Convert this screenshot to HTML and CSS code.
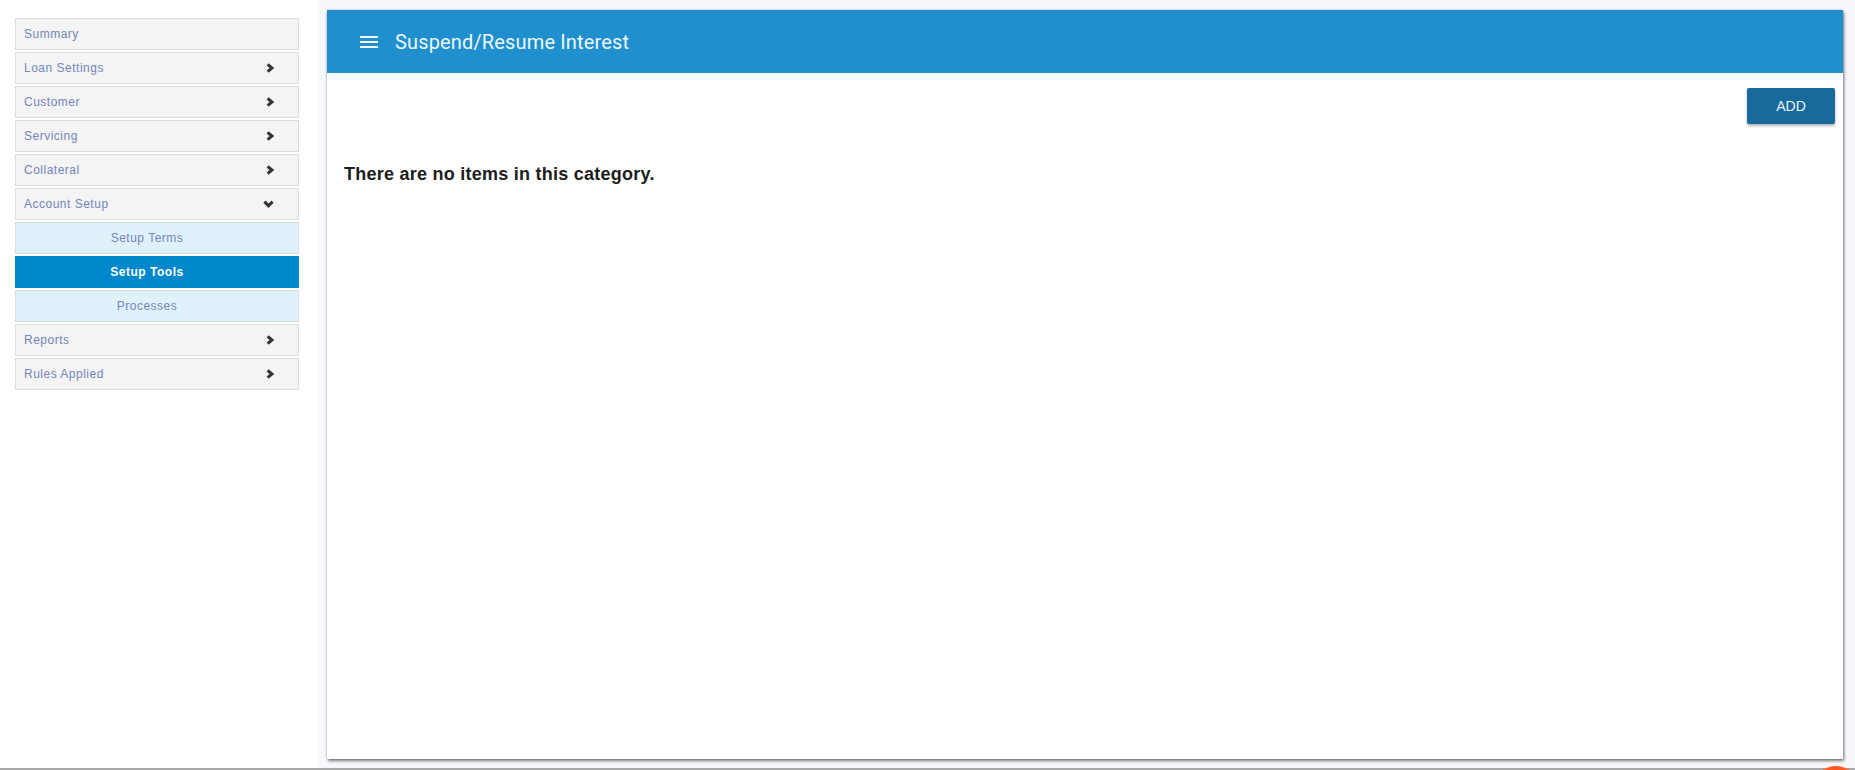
FILE: index.html
```html
<!DOCTYPE html>
<html lang="en">
<head>
<meta charset="utf-8">
<title>Suspend/Resume Interest</title>
<link rel="stylesheet" href="styles.css">
</head>
<body>
<div class="app">
  <aside class="sidebar">
    <nav class="menu">
      <div class="item"><span>Summary</span></div>
      <div class="item"><span>Loan Settings</span><svg class="chev" viewBox="0 0 8 10"><polyline points="1.6,1.4 6,5 1.6,8.6"/></svg></div>
      <div class="item"><span>Customer</span><svg class="chev" viewBox="0 0 8 10"><polyline points="1.6,1.4 6,5 1.6,8.6"/></svg></div>
      <div class="item"><span>Servicing</span><svg class="chev" viewBox="0 0 8 10"><polyline points="1.6,1.4 6,5 1.6,8.6"/></svg></div>
      <div class="item"><span>Collateral</span><svg class="chev" viewBox="0 0 8 10"><polyline points="1.6,1.4 6,5 1.6,8.6"/></svg></div>
      <div class="item"><span>Account Setup</span><svg class="chev down" viewBox="0 0 11 8"><polyline points="1.4,1.6 5.5,5.8 9.6,1.6"/></svg></div>
      <div class="sub">Setup Terms</div>
      <div class="sub active">Setup Tools</div>
      <div class="sub">Processes</div>
      <div class="item"><span>Reports</span><svg class="chev" viewBox="0 0 8 10"><polyline points="1.6,1.4 6,5 1.6,8.6"/></svg></div>
      <div class="item"><span>Rules Applied</span><svg class="chev" viewBox="0 0 8 10"><polyline points="1.6,1.4 6,5 1.6,8.6"/></svg></div>
    </nav>
  </aside>
  <main class="main">
    <section class="card">
      <header class="card-head">
        <svg class="burger" viewBox="0 0 18 12"><rect x="0" y="0" width="18" height="2"/><rect x="0" y="5" width="18" height="2"/><rect x="0" y="10" width="18" height="2"/></svg>
        <h1 class="title">Suspend/Resume Interest</h1>
      </header>
      <div class="card-body">
        <div class="actions"><button class="btn">ADD</button></div>
        <p class="empty">There are no items in this category.</p>
      </div>
    </section>
  </main>
</div>
<div class="chat-bubble"></div>
</body>
</html>
```
FILE: styles.css
```css
* { box-sizing: border-box; }
html, body { margin: 0; padding: 0; }
body {
  width: 1855px;
  height: 770px;
  overflow: hidden;
  background: #ffffff;
  font-family: "Liberation Sans", Arial, sans-serif;
}
.app {
  display: flex;
  height: 770px;
  border-bottom: 2px solid #a9a9a9;
}
.sidebar {
  width: 317px;
  flex: none;
  background: #ffffff;
  padding: 18px 18px 0 15px;
}
.menu {
  display: flex;
  flex-direction: column;
  gap: 2px;
}
.item, .sub {
  height: 32px;
  border: 1px solid #dcdcdc;
  background: #f4f4f4;
  color: #7385bb;
  font-size: 12px;
  letter-spacing: 0.5px;
  display: flex;
  align-items: center;
}
.item {
  padding: 0 0 1px 8px;
  justify-content: space-between;
}
.chev {
  width: 8px;
  height: 10px;
  margin-right: 24px;
  fill: none;
  stroke: #333333;
  stroke-width: 3.1;
  stroke-linecap: butt;
  stroke-linejoin: miter;
}
.chev.down {
  width: 11px;
  height: 8px;
  margin-right: 24px;
}
.sub {
  justify-content: center;
  background: #dff2fb;
  padding: 0 20px 1px 0;
}
.sub.active {
  background: #0088cc;
  border-color: #0088cc;
  color: #ffffff;
  font-weight: bold;
}
.main {
  flex: 1;
  background: #f7f8fc;
  padding: 10px 12px 9px 10px;
}
.card {
  height: 749px;
  background: #ffffff;
  box-shadow: 1px 2px 3px rgba(0, 0, 0, 0.5), 0 0 2px rgba(0, 0, 0, 0.25);
  display: flex;
  flex-direction: column;
}
.card-head {
  height: 63px;
  flex: none;
  background: #208fce;
  display: flex;
  align-items: center;
  padding-left: 33px;
  gap: 17px;
}
.burger {
  width: 18px;
  height: 12px;
  fill: #f2f8fc;
}
.title {
  margin: 0;
  font-family: Roboto, "Liberation Sans", sans-serif;
  font-weight: 400;
  font-size: 20px;
  color: #eef7fd;
  letter-spacing: 0.15px;
}
.card-body {
  padding: 15px 8px 0 17px;
}
.actions {
  display: flex;
  justify-content: flex-end;
}
.btn {
  width: 88px;
  height: 36px;
  border: none;
  border-radius: 2px;
  background: #19699c;
  color: #eaf4fb;
  font-family: "Liberation Sans", Arial, sans-serif;
  font-size: 14px;
  box-shadow: 0 2px 3px rgba(0, 0, 0, 0.3);
  padding: 0;
}
.empty {
  margin: 40px 0 0 0;
  font-size: 18px;
  font-weight: bold;
  color: #1c1c1c;
  letter-spacing: 0.25px;
}
.chat-bubble {
  position: fixed;
  left: 1811px;
  top: 766px;
  width: 50px;
  height: 50px;
  border-radius: 50%;
  background: #ff5722;
}
```
